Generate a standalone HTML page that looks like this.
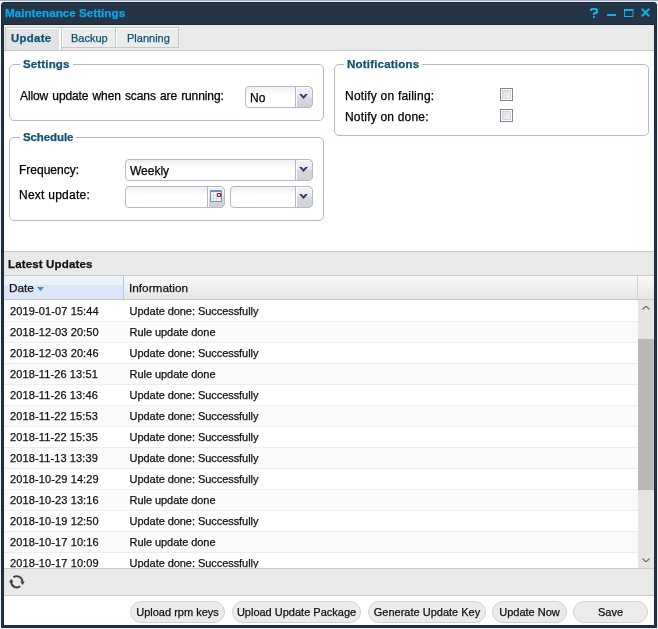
<!DOCTYPE html>
<html><head><meta charset="utf-8">
<style>
*{margin:0;padding:0;box-sizing:border-box}
html,body{width:658px;height:629px;overflow:hidden;background:#fff;font-family:"Liberation Sans",sans-serif}
.t,.row,.btn,.ftxt,.leg{-webkit-text-stroke:0.25px currentColor}
.a{position:absolute}
.t{position:absolute;white-space:nowrap;line-height:14px}
#win{position:absolute;left:0;top:0;width:658px;height:629px;background:#eef3fb;will-change:transform}
#frame{position:absolute;left:1px;top:2px;width:656px;height:626px;background:#263546;border:1px solid #1b2a3a;border-radius:3px 3px 0 0}
#body{position:absolute;left:4px;top:25px;width:650px;height:600px;background:#fff;box-shadow:0 0 0 1px #1b2a3a}
.title{color:#0aa8ec;font-weight:bold;font-size:11.7px}
.tabtxt{color:#0c5275;font-size:11px}
.fs{position:absolute;border:1px solid #b5b8c9;border-radius:5px}
.leg{position:absolute;background:#fff;color:#0f5174;font-weight:bold;font-size:11.5px;letter-spacing:0.15px;line-height:14px;padding:0 3px;white-space:nowrap}
.lbl{font-size:12px;color:#000}
.field{position:absolute;border:1px solid #b5b8c9;border-radius:4px;clip-path:polygon(0 0,calc(100% - 3px) 0,100% 3px,100% calc(100% - 3px),calc(100% - 3px) 100%,0 100%);background:linear-gradient(#eef0f1,#fff 45%);overflow:hidden}
.trig{position:absolute;top:0;bottom:0;right:0;width:17px;border-left:1px solid #b5b8c9;box-shadow:inset 1px 1px 0 #fff;background:linear-gradient(#f1f1f1,#ececec 45%,#d9d9d9 50%,#d2d2d2)}
.ftxt{position:absolute;left:4px;top:4px;font-size:12px;line-height:14px;color:#000}
.row{position:absolute;left:4px;width:634px;height:21px;border-top:1px solid #ededed;font-size:11px;color:#111;line-height:20px}
.row span{position:absolute;top:0;white-space:nowrap}
.c1{left:6px;letter-spacing:0.12px}.c2{left:125.6px;letter-spacing:-0.06px}
.btn{position:absolute;top:601px;height:22px;border:1px solid #d2d2d2;border-radius:11px;background:#ebebeb;font-size:11px;color:#111;text-align:center;line-height:20px;white-space:nowrap}
.cb{position:absolute;width:13px;height:13px;border:1px solid #858585;background:#fff}
.cb i{position:absolute;left:1px;top:1px;width:9px;height:9px;border:1px solid #d0d3dc;background:linear-gradient(135deg,#d9dce6,#f6f6f6)}
</style></head><body>
<div id="win">
 <div class="a" style="left:0;top:0;width:658px;height:1px;background:#9fb0c6"></div>
 <div id="frame"></div>
 <div class="t title" style="left:5px;top:6px">Maintenance Settings</div>
 <svg class="a" style="left:586px;top:4px" width="70" height="18" viewBox="586 4 70 18">
  <g fill="#08b0ee">
   <rect x="591" y="8" width="6" height="2"/>
   <rect x="590" y="9" width="2" height="2"/>
   <rect x="596" y="9" width="2" height="4"/>
   <rect x="594" y="12" width="3" height="2"/>
   <rect x="593" y="13" width="2" height="2"/>
   <rect x="593" y="16" width="2" height="2"/>
   <rect x="607" y="14" width="9" height="2"/>
   <path d="M624 9h9.5v8h-9.5z M625 11v5h7.5v-5z" fill-rule="evenodd"/>
  </g>
  <path d="M641.7 8.7L649.3 16.3M649.3 8.7L641.7 16.3" stroke="#08b0ee" stroke-width="2"/>
 </svg>
 <div id="body"></div>
 <!-- tab strip -->
 <div class="a" style="left:4px;top:25px;width:650px;height:26px;background:#e9eaea;border-bottom:1px solid #c6c6c6"></div>
 <div class="a" style="left:5px;top:27px;width:57px;height:23px;background:#e2e3e4;border:1px solid #c9c9c9;border-bottom:0;box-shadow:inset -2px 1px 0 #fff"></div>
 <div class="a" style="left:61px;top:27px;width:55px;height:21px;background:#ebecec;border:1px solid #c6c6c6;box-shadow:inset 1px 1px 0 #fff"></div>
 <div class="a" style="left:115px;top:27px;width:64px;height:21px;background:#ebecec;border:1px solid #c6c6c6;box-shadow:inset 1px 1px 0 #fff"></div>
 <div class="t tabtxt" style="left:11px;top:31px;font-weight:bold;font-size:11.4px;letter-spacing:0.3px">Update</div>
 <div class="t tabtxt" style="left:71px;top:31px">Backup</div>
 <div class="t tabtxt" style="left:127px;top:31px">Planning</div>

 <!-- Settings fieldset -->
 <div class="fs" style="left:9px;top:64px;width:315px;height:57px"></div>
 <div class="leg" style="left:20px;top:57px">Settings</div>
 <div class="t lbl" style="left:20px;top:89px;letter-spacing:-0.1px;word-spacing:0.9px">Allow update when scans are running:</div>
 <div class="field" style="left:245px;top:86px;width:68px;height:22px"><div class="ftxt">No</div><div class="trig"></div></div>

 <!-- Notifications -->
 <div class="fs" style="left:334px;top:64px;width:315px;height:72px"></div>
 <div class="leg" style="left:344px;top:57px;letter-spacing:0.2px">Notifications</div>
 <div class="t lbl" style="left:345px;top:89px;letter-spacing:0.22px">Notify on failing:</div>
 <div class="t lbl" style="left:345px;top:110px;letter-spacing:0.2px">Notify on done:</div>

 <!-- Schedule -->
 <div class="fs" style="left:9px;top:137px;width:315px;height:84px"></div>
 <div class="leg" style="left:20px;top:130px;letter-spacing:-0.1px">Schedule</div>
 <div class="t lbl" style="left:19px;top:163px">Frequency:</div>
 <div class="t lbl" style="left:19px;top:188px;letter-spacing:0.25px">Next update:</div>
 <div class="field" style="left:125px;top:159px;width:188px;height:22px"><div class="ftxt">Weekly</div><div class="trig"></div></div>
 <div class="field" style="left:125px;top:186px;width:100px;height:22px"><div class="trig"></div></div>
 <div class="field" style="left:230px;top:186px;width:83px;height:22px"><div class="trig"></div></div>

 <!-- grid panel -->
 <div class="a" style="left:4px;top:251px;width:650px;height:25px;background:#e8e9e9;border-top:1px solid #c9c9c9;border-bottom:1px solid #c9c9c9"></div>
 <div class="t" style="left:8px;top:257px;font-weight:bold;font-size:11.5px;letter-spacing:0.15px;color:#111">Latest Updates</div>
 <div class="a" style="left:4px;top:276px;width:119px;height:23px;background:linear-gradient(#eaf2fc 0,#eaf2fc 9px,#dbe7f8 9px)"></div>
 <div class="a" style="left:123px;top:276px;width:1px;height:23px;background:#a9c8ef"></div>
 <div class="a" style="left:124px;top:276px;width:514px;height:23px;background:linear-gradient(#f9f9f9,#e6e6e6);border-right:1px solid #d0d0d0"></div>
 <div class="a" style="left:638px;top:276px;width:16px;height:23px;background:linear-gradient(#f9f9f9,#e6e6e6)"></div>
 <div class="a" style="left:4px;top:299px;width:650px;height:1px;background:#c6c6c6"></div>
 <div class="t" style="left:9px;top:281px;font-size:11.8px;color:#111">Date</div>
 <div class="t" style="left:129px;top:281px;font-size:11.8px;color:#111">Information</div>
 <div class="a" style="left:4px;top:300px;width:650px;height:268px;background:#fff;overflow:hidden">
  <div style="position:absolute;left:-4px;top:-300px;width:658px;height:629px">
<div class="row" style="top:300px;background:#fff;border-top-color:#fff"><span class="c1">2019-01-07 15:44</span><span class="c2">Update done: Successfully</span></div>
<div class="row" style="top:321px;background:#fafafa;border-top-color:#ededed"><span class="c1">2018-12-03 20:50</span><span class="c2">Rule update done</span></div>
<div class="row" style="top:342px;background:#fff;border-top-color:#ededed"><span class="c1">2018-12-03 20:46</span><span class="c2">Update done: Successfully</span></div>
<div class="row" style="top:363px;background:#fafafa;border-top-color:#ededed"><span class="c1">2018-11-26 13:51</span><span class="c2">Rule update done</span></div>
<div class="row" style="top:384px;background:#fff;border-top-color:#ededed"><span class="c1">2018-11-26 13:46</span><span class="c2">Update done: Successfully</span></div>
<div class="row" style="top:405px;background:#fafafa;border-top-color:#ededed"><span class="c1">2018-11-22 15:53</span><span class="c2">Update done: Successfully</span></div>
<div class="row" style="top:426px;background:#fff;border-top-color:#ededed"><span class="c1">2018-11-22 15:35</span><span class="c2">Update done: Successfully</span></div>
<div class="row" style="top:447px;background:#fafafa;border-top-color:#ededed"><span class="c1">2018-11-13 13:39</span><span class="c2">Update done: Successfully</span></div>
<div class="row" style="top:468px;background:#fff;border-top-color:#ededed"><span class="c1">2018-10-29 14:29</span><span class="c2">Update done: Successfully</span></div>
<div class="row" style="top:489px;background:#fafafa;border-top-color:#ededed"><span class="c1">2018-10-23 13:16</span><span class="c2">Rule update done</span></div>
<div class="row" style="top:510px;background:#fff;border-top-color:#ededed"><span class="c1">2018-10-19 12:50</span><span class="c2">Update done: Successfully</span></div>
<div class="row" style="top:531px;background:#fafafa;border-top-color:#ededed"><span class="c1">2018-10-17 10:16</span><span class="c2">Rule update done</span></div>
<div class="row" style="top:552px;background:#fff;border-top-color:#ededed"><span class="c1">2018-10-17 10:09</span><span class="c2">Update done: Successfully</span></div>
  </div>
 </div>
 <!-- scrollbar -->
 <div class="a" style="left:638px;top:300px;width:16px;height:268px;background:#e4e4e4"></div>
 <div class="a" style="left:638px;top:339px;width:16px;height:151px;background:#b8b8b8"></div>
 <div class="a" style="left:653px;top:300px;width:1px;height:268px;background:#efefef"></div>
 <div class="a" style="left:653px;top:339px;width:1px;height:151px;background:#c6c6c6"></div>

 <!-- toolbar -->
 <div class="a" style="left:4px;top:568px;width:650px;height:28px;background:#e8e9e9;border-top:1px solid #c9c9c9;border-bottom:1px solid #c9c9c9"></div>

 <!-- buttons -->
 <div class="btn" style="left:130px;width:95px">Upload rpm keys</div>
 <div class="btn" style="left:232px;width:129px">Upload Update Package</div>
 <div class="btn" style="left:368px;width:118px">Generate Update Key</div>
 <div class="btn" style="left:492px;width:75px">Update Now</div>
 <div class="btn" style="left:573px;width:75px">Save</div>

 <!-- checkboxes -->
 <div class="cb" style="left:500px;top:88px"><i></i></div>
 <div class="cb" style="left:500px;top:109px"><i></i></div>
 <svg class="a" style="left:0;top:0" width="658" height="629" viewBox="0 0 658 629">
  <g fill="#1f3d8a">
   <path d="M299 94H301.6L303.5 96.1L305.4 94H308L303.5 99z"/>
   <path d="M299 167H301.6L303.5 169.1L305.4 167H308L303.5 172z"/>
   <path d="M299 194H301.6L303.5 196.1L305.4 194H308L303.5 199z"/>
  </g>
  <path d="M309.5 86.5L312.5 89.5M309.5 107.5L312.5 104.5M309.5 159.5L312.5 162.5M309.5 180.5L312.5 177.5M221.5 186.5L224.5 189.5M221.5 207.5L224.5 204.5M309.5 186.5L312.5 189.5M309.5 207.5L312.5 204.5" stroke="#b5b8c9" stroke-width="1" fill="none"/>
  <!-- calendar -->
  <rect x="210.5" y="190.5" width="11" height="11" fill="#f4f4f4" stroke="#6f8fc2"/>
  <rect x="210" y="190" width="12" height="2" fill="#6f8fc2"/>
  <g fill="#dcdcdc">
   <rect x="211" y="195" width="10" height="1"/>
   <rect x="211" y="198" width="10" height="1"/>
   <rect x="213" y="192" width="1" height="9"/>
   <rect x="216" y="192" width="1" height="9"/>
  </g>
  <rect x="217.5" y="193.5" width="3" height="3" fill="#fff" stroke="#9a0a0a" stroke-width="1.2" rx="0.8"/>
  <!-- sort arrow -->
  <path d="M37 287H44L40.5 291z" fill="#4a86cc"/>
  <!-- scroll arrows -->
  <path d="M642.5 309.5L645.5 306.5H646.5L649.5 309.5" fill="none" stroke="#666" stroke-width="1.1"/>
  <path d="M642.5 558.5L645.5 561.5H646.5L649.5 558.5" fill="none" stroke="#666" stroke-width="1.1"/>
  <!-- refresh -->
  <g stroke="#3c3c3c" stroke-width="1.9" fill="none">
   <path d="M13.43 577.33A5.6 5.6 0 0 1 22.4 581.6"/>
   <path d="M20.17 586.27A5.6 5.6 0 0 1 11.2 582"/>
  </g>
  <g fill="#3c3c3c">
   <path d="M20.3 581.4H24.7L22.5 584.9z"/>
   <path d="M9 582.2H13.4L11.2 578.7z"/>
  </g>
 </svg>

</div>
</body></html>
